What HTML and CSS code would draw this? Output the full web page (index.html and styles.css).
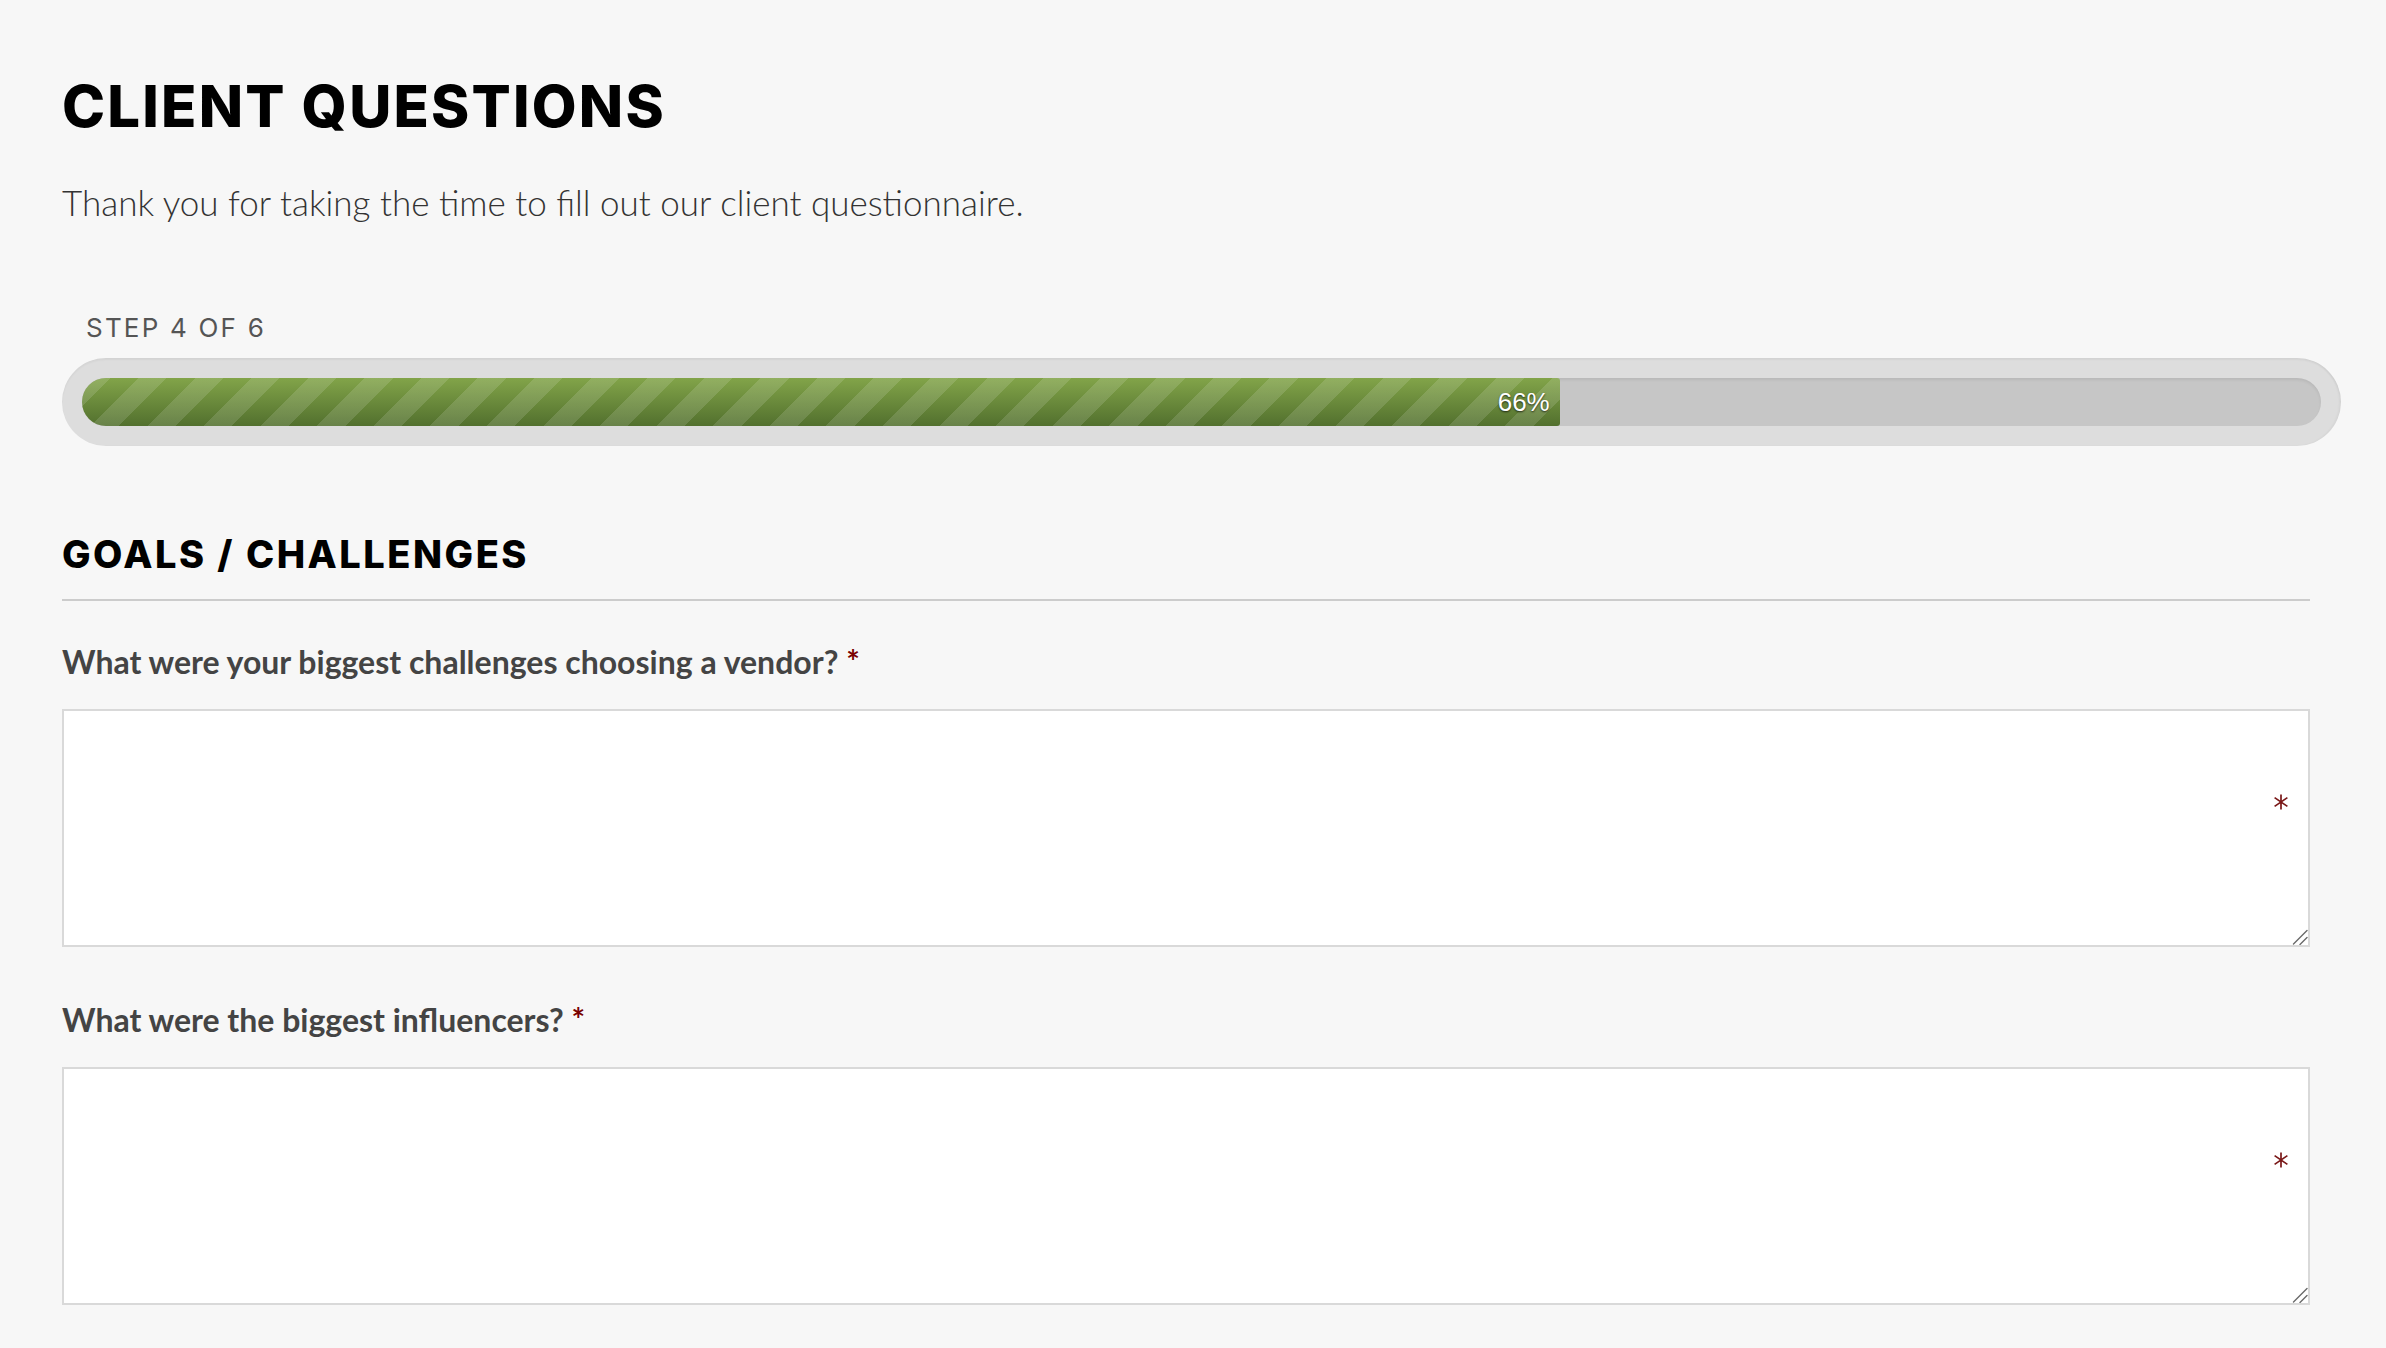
FILE: index.html
```html
<!DOCTYPE html>

<html lang="en">
<head>
<meta charset="utf-8" />
<title>Client Questions</title>
<link rel="stylesheet" href="styles.css">
</head>

<body>
	<div class="page">
		<h1 class="formTitle">CLIENT QUESTIONS</h1>
		<p class="formIntro">Thank you for taking the time to fill out our client questionnaire.</p>

		<div class="progress">
			<p class="progressStep">STEP 4 OF 6</p>
			<div class="progressOuter">
				<div class="progressTrack">
					<div class="progressFill" style="width: 66%;">
						<span class="progressText">66%</span>
					</div>
				</div>
			</div>
		</div>

		<form name="clientQuestions" method="post">
			<h2 class="sectionTitle">GOALS / CHALLENGES</h2>

			<div class="field">
				<label class="fieldLabel" for="challenges">What were your biggest challenges choosing a vendor? <span class="required">*</span></label>
				<div class="fieldInput">
					<textarea class="textArea" id="challenges" name="challenges"></textarea>
					<span class="reqMark">
						<svg width="16" height="16" viewBox="0 0 16 16"><path d="M8 0.5V15.5M1.6 3.6L14.4 12.4M1.6 12.4L14.4 3.6" /></svg>
					</span>
					<span class="grip">
						<svg width="16" height="16" viewBox="0 0 16 16"><path d="M1.5 15L15 1.5M8 15.5L15 8.5" /></svg>
					</span>
				</div>
			</div>

			<div class="field">
				<label class="fieldLabel" for="influencers">What were the biggest influencers? <span class="required">*</span></label>
				<div class="fieldInput">
					<textarea class="textArea" id="influencers" name="influencers"></textarea>
					<span class="reqMark">
						<svg width="16" height="16" viewBox="0 0 16 16"><path d="M8 0.5V15.5M1.6 3.6L14.4 12.4M1.6 12.4L14.4 3.6" /></svg>
					</span>
					<span class="grip">
						<svg width="16" height="16" viewBox="0 0 16 16"><path d="M1.5 15L15 1.5M8 15.5L15 8.5" /></svg>
					</span>
				</div>
			</div>
		</form>
	</div>
</body>
</html>
```

FILE: styles.css
```css
html {
	font-family: Lato, sans-serif;
	background-color: #f7f7f7;
}

body {
	margin: 0;
}

.page {
	padding: 71px 76px 0 62px;
}

.formTitle {
	margin: 0;
	font-family: Inter, sans-serif;
	font-size: 58px;
	line-height: 70px;
	font-weight: 800;
	letter-spacing: 2.2px;
	color: #000;
}

.formIntro {
	margin: 42px 0 0 0;
	font-size: 35px;
	line-height: 38px;
	font-weight: 300;
	color: #333;
}

.progress {
	margin: 91px -31px 0 0;
}

.progressStep {
	margin: 0 0 14px 0;
	padding-left: 24px;
	font-family: Inter, sans-serif;
	font-size: 26px;
	line-height: 32px;
	font-weight: 400;
	letter-spacing: 2.2px;
	color: #555;
}

.progressOuter {
	padding: 20px;
	background-color: #dddddd;
	border-radius: 44px;
	box-shadow: inset 0 2px 2px rgba(0, 0, 0, .04), inset -2px 0 2px rgba(0, 0, 0, .03);
}

.progressTrack {
	height: 48px;
	background-color: #c6c6c6;
	border-radius: 24px;
	box-shadow: inset 0 2px 3px rgba(0, 0, 0, .07);
}

.progressFill {
	height: 48px;
	box-sizing: border-box;
	display: flex;
	align-items: center;
	justify-content: flex-end;
	padding-right: 10px;
	border-radius: 24px 3px 3px 24px;
	background-color: #6c8f3e;
	background-image: repeating-linear-gradient(135deg, rgba(255, 255, 255, .13) 0, rgba(255, 255, 255, .13) 20px, transparent 20px, transparent 40px), linear-gradient(to bottom, #82a449, #52702e);
}

.progressText {
	font-family: "Liberation Sans", Arial, sans-serif;
	font-size: 26px;
	color: #fff;
	text-shadow: 0 1px 2px rgba(0, 0, 0, .7);
}

.sectionTitle {
	margin: 85px 0 0 0;
	padding-bottom: 22px;
	border-bottom: 2px solid #cccccc;
	font-family: Inter, sans-serif;
	font-size: 38px;
	line-height: 46px;
	font-weight: 800;
	letter-spacing: 2.5px;
	color: #000;
}

.field {
	margin-top: 43px;
}

.field + .field {
	margin-top: 55px;
}

.fieldLabel {
	display: block;
	font-size: 32px;
	line-height: 36px;
	font-weight: 700;
	color: #444;
}

.required {
	color: #790000;
}

.fieldInput {
	position: relative;
	margin-top: 29px;
}

.textArea {
	display: block;
	box-sizing: border-box;
	width: 100%;
	height: 238px;
	margin: 0;
	border: 2px solid #d9d9d9;
	background-color: #fff;
	font-family: Lato, sans-serif;
	font-size: 28px;
	resize: none;
}

.reqMark {
	position: absolute;
	top: 85px;
	right: 21px;
	width: 16px;
	height: 16px;
}

.reqMark svg {
	display: block;
	fill: none;
	stroke: #7a1818;
	stroke-width: 1.7;
}

.grip {
	position: absolute;
	right: 2px;
	bottom: 2px;
	width: 16px;
	height: 16px;
	pointer-events: none;
}

.grip svg {
	display: block;
	fill: none;
	stroke: #6a6a6a;
	stroke-width: 1.4;
	stroke-linecap: round;
}
```
